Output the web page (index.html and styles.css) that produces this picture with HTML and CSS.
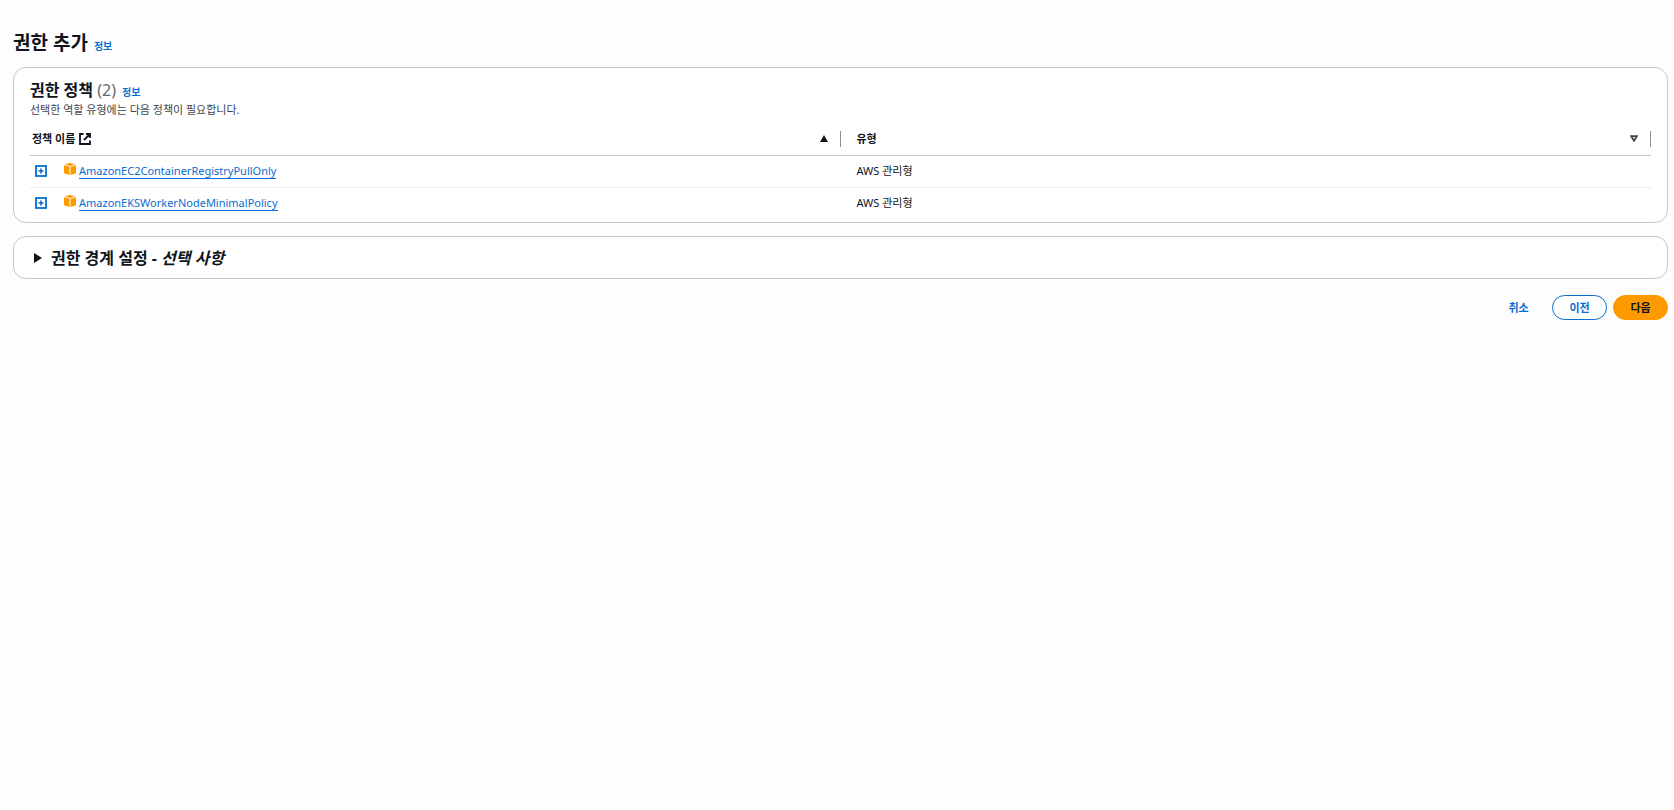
FILE: index.html
```html
<!DOCTYPE html>
<html lang="ko">
<head>
<meta charset="UTF-8">
<meta name="viewport" content="width=device-width, initial-scale=1.0">
<title>권한 추가</title>
<link rel="stylesheet" href="styles.css">
</head>
<body>

<svg class="sprite" aria-hidden="true">
    <symbol id="icon-expand" viewBox="0 0 12 12">
        <rect x="1" y="1" width="10" height="10" fill="#fff" stroke="#096cd0" stroke-width="1.8"/>
        <path d="M6 3.5v5M3.5 6h5" stroke="#096cd0" stroke-width="1.6"/>
    </symbol>
    <symbol id="icon-policy" viewBox="0 0 12 12">
        <path d="M6 0l5.4 1.5L6 3 .6 1.5z" fill="#f90"/>
        <path d="M0 2.3l5.5 1.5V12L0 10.3zM12 2.3L6.5 3.8V12l5.5-1.7z" fill="#f90"/>
    </symbol>
</svg>

<main class="page">
    <header class="page-header">
        <h1 class="page-title">권한 추가</h1>
        <a class="info-link" href="#">정보</a>
    </header>

    <section class="panel policies">
        <div class="panel-header">
            <h2 class="panel-title">권한 정책 <span class="counter">(2)</span></h2>
            <a class="info-link" href="#">정보</a>
        </div>
        <p class="description">선택한 역할 유형에는 다음 정책이 필요합니다.</p>

        <table class="policy-table">
            <thead>
                <tr>
                    <th>
                        <div class="column-head">
                            <span>정책 이름</span>
                            <svg class="icon" viewBox="0 0 12 12" fill="none" stroke="#0f141a" stroke-width="1.8"><path d="M4.5 1H1v10h10V7.5M7 1h4v4M11 1L5 7"/></svg>
                            <svg class="sort" viewBox="0 0 8 7"><path d="M4 0l4 7H0z" fill="#0f141a"/></svg>
                        </div>
                    </th>
                    <th>
                        <div class="column-head">
                            <span>유형</span>
                            <svg class="sort" viewBox="0 0 8 7"><path d="M1.2 1.2h5.6L4 5.8z" fill="none" stroke="#424650" stroke-width="1.8"/></svg>
                        </div>
                    </th>
                </tr>
            </thead>
            <tbody>
                <tr>
                    <td>
                        <div class="policy">
                            <button class="expand" type="button" aria-label="펼치기"><svg class="icon"><use href="#icon-expand"/></svg></button>
                            <svg class="icon policy-icon"><use href="#icon-policy"/></svg>
                            <a class="policy-link" href="#">AmazonEC2ContainerRegistryPullOnly</a>
                        </div>
                    </td>
                    <td>AWS 관리형</td>
                </tr>
                <tr>
                    <td>
                        <div class="policy">
                            <button class="expand" type="button" aria-label="펼치기"><svg class="icon"><use href="#icon-expand"/></svg></button>
                            <svg class="icon policy-icon"><use href="#icon-policy"/></svg>
                            <a class="policy-link" href="#">AmazonEKSWorkerNodeMinimalPolicy</a>
                        </div>
                    </td>
                    <td>AWS 관리형</td>
                </tr>
            </tbody>
        </table>
    </section>

    <details class="panel boundary">
        <summary class="boundary-summary">
            <svg class="caret" viewBox="0 0 8 10"><path d="M0 0l8 5-8 5z" fill="#0f141a"/></svg>
            <h2 class="panel-title">권한 경계 설정 - <em>선택 사항</em></h2>
        </summary>
    </details>

    <div class="actions">
        <button class="btn btn-link" type="button">취소</button>
        <button class="btn btn-normal" type="button">이전</button>
        <button class="btn btn-primary" type="button">다음</button>
    </div>
</main>

</body>
</html>
```
FILE: styles.css
```css
* {
    box-sizing: border-box;
}

body {
    margin: 0;
    background: #fdfdfd;
    color: #0f141a;
    font-family: "Noto Sans", "Noto Sans CJK KR", sans-serif;
    font-size: 11px;
    line-height: 16px;
}

h1, h2, p {
    margin: 0;
}

a {
    color: #096cd0;
    text-decoration: none;
}

.sprite {
    display: none;
}

.page {
    padding: 30px 6px 0 13px;
}

.page-header,
.panel-header {
    display: flex;
    align-items: baseline;
    gap: 6px;
}

.page-header {
    margin-bottom: 11px;
}

.page-title {
    font-size: 19px;
    line-height: 26px;
}

.panel-title {
    font-size: 16px;
    line-height: 20px;
}

.info-link {
    font-size: 10px;
    font-weight: 700;
}

.counter {
    color: #656871;
    font-weight: 400;
}

.panel {
    border: 1px solid #c6c6cd;
    border-radius: 13px;
    background: #fff;
    margin-bottom: 13px;
}

.policies {
    padding: 12px 16px 3px;
}

.description {
    color: #424650;
    line-height: 20px;
}

.policy-table {
    width: 100%;
    table-layout: fixed;
    border-collapse: collapse;
}

.policy-table th {
    height: 35px;
    padding: 3px 0 0;
    border-bottom: 1px solid #c6c6cd;
    text-align: left;
}

.policy-table td {
    height: 32px;
    padding: 0 16px;
}

.policy-table tbody tr + tr td {
    border-top: 1px solid #ebebf0;
}

.column-head {
    display: flex;
    align-items: center;
    gap: 4px;
    padding: 0 12px 0 2px;
    border-right: 1px solid #8c8c94;
}

.policy-table th + th .column-head {
    padding-left: 16px;
}

.icon {
    display: block;
    width: 12px;
    height: 12px;
}

.sort {
    width: 8px;
    height: 7px;
    margin-left: auto;
}

.policy-table td:first-child {
    padding-left: 5px;
}

.policy {
    display: flex;
    align-items: center;
}

.expand {
    padding: 0;
    border: 0;
    background: none;
    margin-right: 17px;
    cursor: pointer;
}

.policy-icon {
    margin: 0 3px 4px 0;
}

.policy-link {
    border-bottom: 1px solid #096cd0;
    line-height: 15px;
}

.boundary-summary {
    display: flex;
    align-items: center;
    gap: 9px;
    padding: 11px 20px 10px;
    list-style: none;
    cursor: pointer;
}

.boundary-summary::-webkit-details-marker {
    display: none;
}

.caret {
    width: 8px;
    height: 10px;
}

.actions {
    display: flex;
    justify-content: flex-end;
    gap: 6px;
    padding-top: 3px;
}

.btn {
    min-width: 55px;
    height: 25px;
    padding: 0 16px;
    border: 1px solid transparent;
    border-radius: 13px;
    background: none;
    font: inherit;
    font-weight: 700;
    cursor: pointer;
}

.btn-link {
    color: #096cd0;
}

.btn-normal {
    border-color: #096cd0;
    background: #fff;
    color: #096cd0;
}

.btn-primary {
    border-color: #f90;
    background: #f90;
    color: #0f141a;
}
```
